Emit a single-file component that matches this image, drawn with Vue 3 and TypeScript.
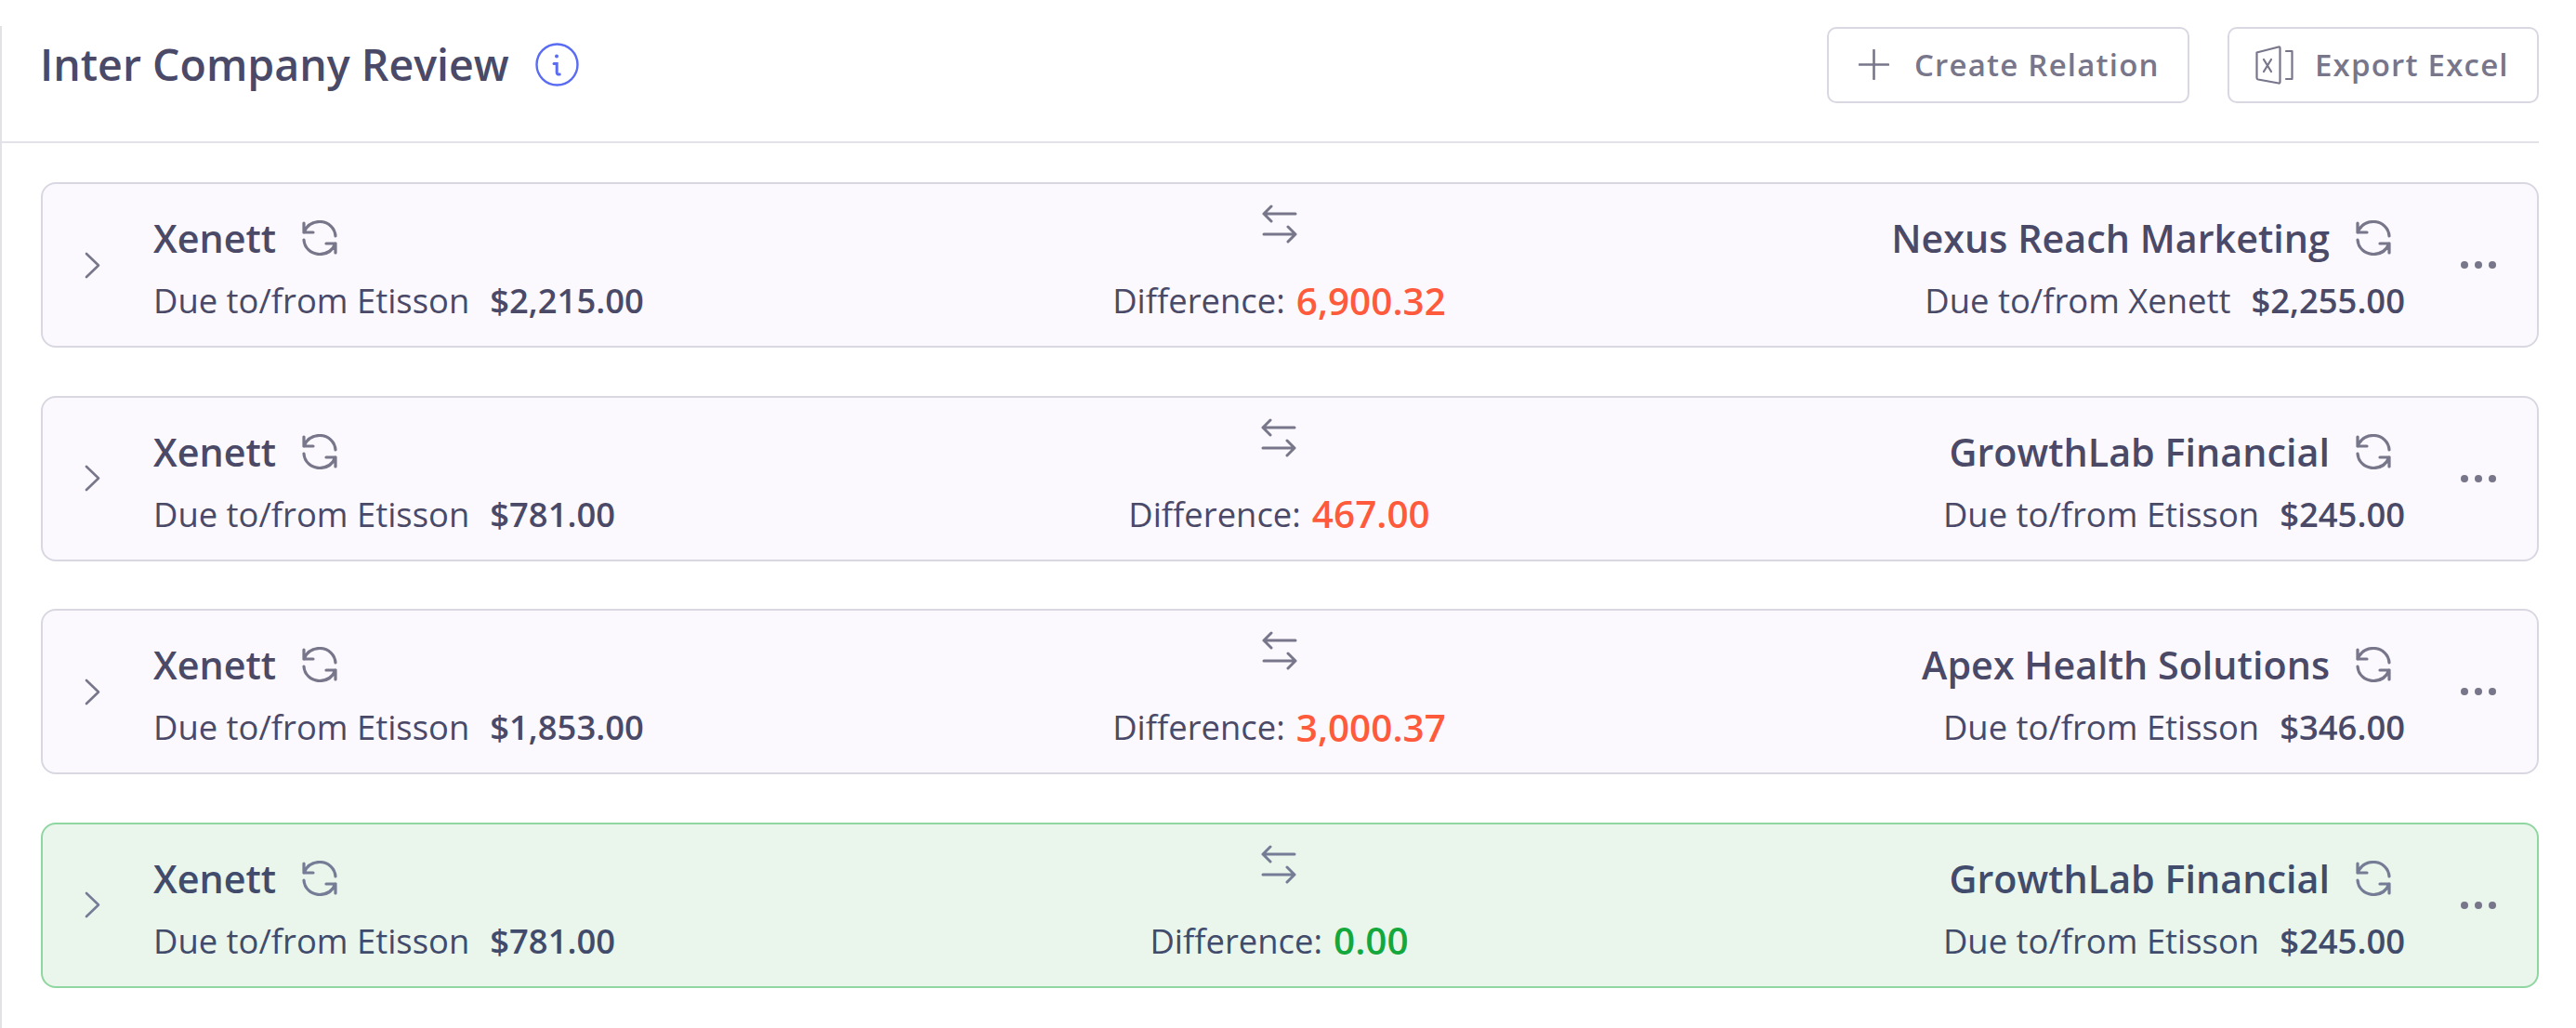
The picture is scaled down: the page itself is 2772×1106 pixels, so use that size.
<script setup lang="ts">
interface Row {
  right: string;
  leftAmount: string;
  rightLabel: string;
  rightAmount: string;
  diff: string;
  ok?: boolean;
}
const rows: Row[] = [
  { right: "Nexus Reach Marketing", leftAmount: "$2,215.00", rightLabel: "Due to/from Xenett", rightAmount: "$2,255.00", diff: "6,900.32" },
  { right: "GrowthLab Financial", leftAmount: "$781.00", rightLabel: "Due to/from Etisson", rightAmount: "$245.00", diff: "467.00" },
  { right: "Apex Health Solutions", leftAmount: "$1,853.00", rightLabel: "Due to/from Etisson", rightAmount: "$346.00", diff: "3,000.37" },
  { right: "GrowthLab Financial", leftAmount: "$781.00", rightLabel: "Due to/from Etisson", rightAmount: "$245.00", diff: "0.00", ok: true },
];
</script>

<template>
  <div class="panel">
    <header class="head">
      <div class="title-wrap">
        <h1 class="title">Inter Company Review</h1>
        <svg class="info" viewBox="0 0 47 47" fill="none">
          <circle cx="23.5" cy="23.5" r="22" stroke="#5a6cf2" stroke-width="2.4" />
          <circle cx="23" cy="14.5" r="2" fill="#5a6cf2" />
          <path d="M20 22.5h3.2v9.500c0 1.600 1 2.300 3 2" stroke="#5a6cf2" stroke-width="3" stroke-linecap="round" />
        </svg>
      </div>
      <div class="actions">
        <button class="btn create">
          <svg class="plus" viewBox="0 0 33 33" fill="none">
            <path d="M16.5 1v31M1 16.500h31" stroke="#77768a" stroke-width="2.6" stroke-linecap="round" />
          </svg>
          <span>Create Relation</span>
        </button>
        <button class="btn export">
          <svg class="excel" viewBox="0 0 41 42" fill="none" stroke="#77768a" stroke-width="2.2" stroke-linejoin="round" stroke-linecap="round">
            <path d="M1.5 7.500 25 1.500c.8-.2 1.500.3 1.500 1.200v36.600c0 .9-.7 1.400-1.500 1.200L3 36.500c-.9-.2-1.500-.8-1.500-1.700z" />
            <path d="M9 15l8 13M17 15 9 28" />
            <path d="M33 6h6.500v30H33" />
          </svg>
          <span>Export Excel</span>
        </button>
      </div>
    </header>

    <section class="list">
      <article v-for="(row, i) in rows" :key="i" class="card" :class="{ ok: row.ok }">
        <svg class="chev" viewBox="0 0 17 29" fill="none">
          <path d="M2 2l13 12.500L2 27" stroke="currentColor" stroke-width="2.6" stroke-linecap="round" stroke-linejoin="round" />
        </svg>
        <div class="body">
          <div class="side">
            <div class="name-row">
              <span class="name">Xenett</span>
              <svg class="sync" viewBox="0 0 38 38" fill="none">
                <path d="M2 3v10h10M2 13C5 6 11 1.500 19 1.500c9.500 0 16.500 7 17 15.500M2 21c.5 8.500 7.500 15.500 17 15.500 8 0 14-4.500 17-11.500M36 35V25H26" stroke="currentColor" stroke-width="3.200" stroke-linecap="round" stroke-linejoin="round" />
              </svg>
            </div>
            <div class="detail"><span>Due to/from Etisson</span><b>{{ row.leftAmount }}</b></div>
          </div>
          <div class="mid">
            <svg class="swap" viewBox="0 0 38 42" fill="none">
              <path d="M36 10H2M10 2l-8 8 8 8M2 32h34M28 24l8 8-8 8" stroke="currentColor" stroke-width="3" stroke-linecap="round" stroke-linejoin="round" />
            </svg>
            <div class="diff"><span>Difference:</span><span class="val">{{ row.diff }}</span></div>
          </div>
          <div class="side right">
            <div class="name-row">
              <span class="name">{{ row.right }}</span>
              <svg class="sync" viewBox="0 0 38 38" fill="none">
                <path d="M2 3v10h10M2 13C5 6 11 1.500 19 1.500c9.500 0 16.500 7 17 15.500M2 21c.5 8.500 7.500 15.500 17 15.500 8 0 14-4.500 17-11.500M36 35V25H26" stroke="currentColor" stroke-width="3.200" stroke-linecap="round" stroke-linejoin="round" />
              </svg>
            </div>
            <div class="detail"><span>{{ row.rightLabel }}</span><b>{{ row.rightAmount }}</b></div>
          </div>
        </div>
        <div class="dots"><i></i><i></i><i></i></div>
      </article>
    </section>
  </div>
</template>

<style>
html, body { background: #fff; }
</style>

<style scoped>
.panel {
  margin-top: 28px;
  width: 2730px;
  border-left: 2px solid #e2e2e6;
  font-family: "Open Sans", "Noto Sans", sans-serif;
  color: #4a4a68;
  padding-bottom: 44px;
}
.head {
  display: flex;
  align-items: center;
  justify-content: space-between;
  height: 126px;
  padding: 1px 0 42px 41px;
  box-sizing: border-box;
  border-bottom: 2px solid #e2e2e8;
}
.title-wrap { display: flex; align-items: center; gap: 28px; }
.title { margin: 0; font-size: 46.500px; font-weight: 600; line-height: 1.2; }
.info { width: 47px; height: 47px; }
.actions { display: flex; gap: 41px; }
.btn {
  display: flex;
  align-items: center;
  height: 82px;
  box-sizing: border-box;
  background: #fff;
  border: 2px solid #d9d8e2;
  border-radius: 10px;
  color: #77768a;
  font: 600 33px "Open Sans", sans-serif;
  letter-spacing: 1.200px;
}
.create { width: 390px; padding-left: 32px; gap: 27px; }
.export { width: 335px; padding-left: 28px; gap: 23px; }
.plus { width: 33px; height: 33px; }
.excel { width: 41px; height: 42px; }
.list {
  display: flex;
  flex-direction: column;
  gap: 51.500px;
  margin-top: 42px;
  padding-left: 42px;
}
.card {
  display: flex;
  align-items: center;
  height: 178px;
  box-sizing: border-box;
  background: #fbf9fd;
  border: 2px solid #d9d8e2;
  border-radius: 16px;
  color: #77768a;
}
.card.ok {
  background: #eaf5ec;
  border-color: #8fd6a0;
  color: #757d96;
}
.chev { width: 17px; height: 29px; margin-left: 45px; margin-right: 57px; flex: none; }
.body {
  flex: 1;
  display: grid;
  grid-template-columns: 1fr auto 1fr;
  color: #4a4a68;
}
.card.ok .body { color: #414b6b; }
.side { display: flex; flex-direction: column; }
.side.right { align-items: flex-end; }
.name-row { display: flex; align-items: center; gap: 28px; height: 60px; margin-top: 4px; }
.right .name-row { margin-right: 15px; }
.name { font-size: 41.300px; font-weight: 600; }
.sync { width: 38px; height: 38px; color: #77768a; flex: none; }
.card.ok .sync { color: #757d96; }
.detail { display: flex; gap: 22px; font-size: 36.400px; height: 50px; align-items: center; margin-top: 12px; }
.detail b { font-weight: 600; }
.mid { display: flex; flex-direction: column; align-items: center; }
.swap { width: 38px; height: 42px; margin-top: -2px; color: #77768a; }
.card.ok .swap { color: #757d96; }
.diff { font-size: 36.400px; margin-top: 36px; height: 50px; display: flex; align-items: center; gap: 12px; white-space: pre; }
.val { font-size: 40.500px; font-weight: 600; color: #ff5a3c; }
.ok .val { color: #14a83c; }
.dots { display: flex; gap: 7px; width: 38px; margin-left: 60px; margin-right: 44px; flex: none; }
.dots i { width: 8px; height: 8px; border-radius: 50%; background: #77768a; }
</style>
